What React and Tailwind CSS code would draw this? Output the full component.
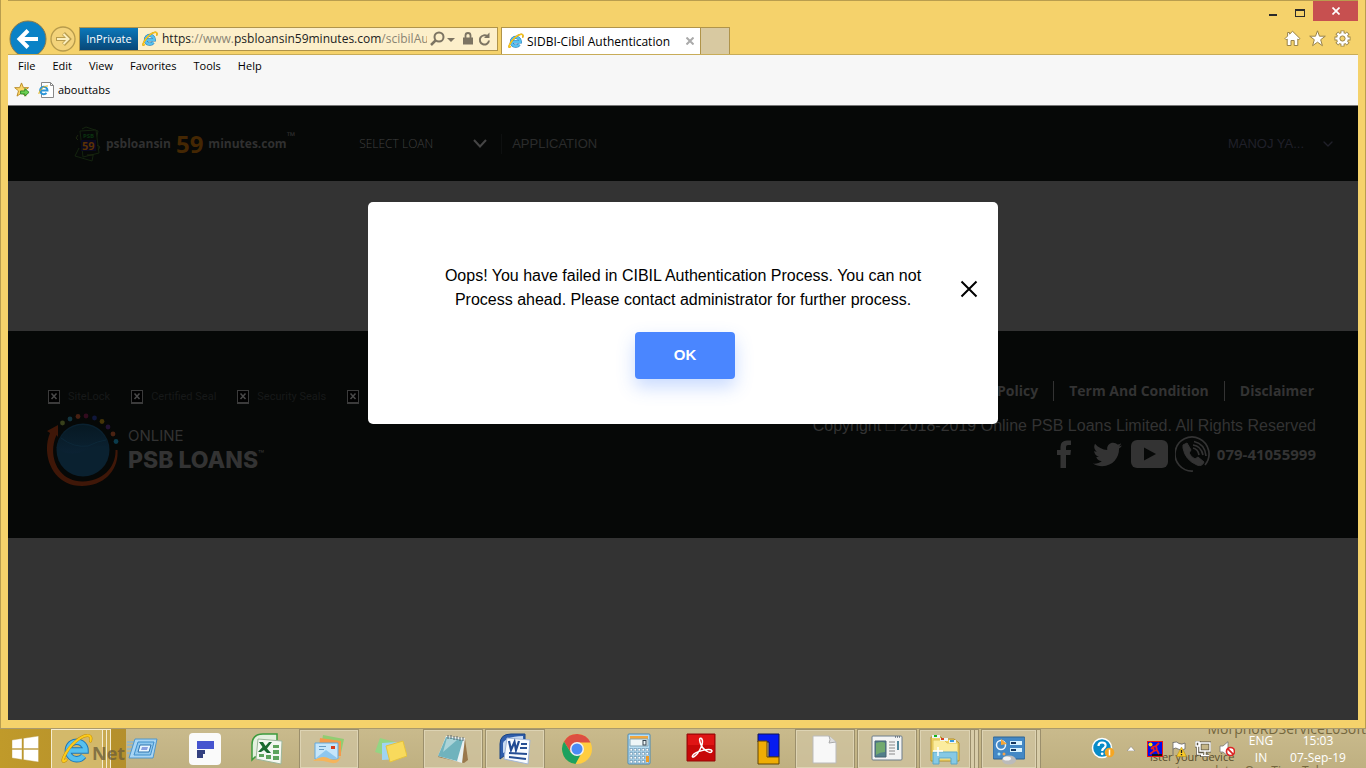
import React from "react";
import { FaTwitter } from "react-icons/fa";
import { ChevronDown } from "lucide-react";

function IeLogo({ className }) {
  return (
    <svg viewBox="0 0 32 32" className={className} aria-hidden="true">
      <path d="M8 17.5H24.5A8.8 8.8 0 1 0 22.6 23" fill="none" stroke="#1d77b8" strokeWidth="6.500" />
      <path d="M8 17.5H24.5A8.8 8.8 0 1 0 22.6 23" fill="none" stroke="#56c0ee" strokeWidth="4.500" />
      <path d="M5 27C-2 33 4 18 14 9C23 1 32 0 29.500 8" fill="none" stroke="#c08a08" strokeWidth="3" strokeLinecap="round" />
      <path d="M5 27C-2 33 4 18 14 9C23 1 32 0 29.500 8" fill="none" stroke="#fccb1c" strokeWidth="2.200" strokeLinecap="round" />
    </svg>
  );
}

function TitleArea() {
  return (
    <div className="flex flex-col h-[54px] overflow-hidden border-t border-[#b99d4e]">
      <div className="flex h-[19px] justify-end">
        <button aria-label="Minimize" className="w-[27px] flex items-center justify-center">
          <span className="w-2 h-0.5 mt-2 bg-[#2a2a2a]" />
        </button>
        <button aria-label="Maximize" className="w-[27px] flex items-center justify-center">
          <span className="w-2.5 h-2 mt-1 border border-t-2 border-[#2a2a2a]" />
        </button>
        <button aria-label="Close window" className="w-[45px] h-[20px] bg-[#c75050] flex items-center justify-center shrink-0">
          <svg viewBox="0 0 8 8" className="w-2 h-2"><path d="M.5 .5L7.500 7.500M7.500 .5L.5 7.500" stroke="#fff" strokeWidth="1.700" /></svg>
        </button>
      </div>
      <div className="flex items-start h-[34px] pl-px">
        <button aria-label="Back" className="shrink-0">
          <svg viewBox="0 0 38 38" className="w-[38px] h-[38px]">
            <circle cx="19" cy="19" r="18" fill="#0a82c6" stroke="#8a7a4a" strokeWidth="1" />
            <path d="M29 19H11M19 10.500L10.500 19L19 27.500" fill="none" stroke="#fff" strokeWidth="4" />
          </svg>
        </button>
        <button aria-label="Forward" className="shrink-0 mt-1.5 ml-[3px]">
          <svg viewBox="0 0 26 26" className="w-[26px] h-[26px]">
            <circle cx="13" cy="13" r="12" fill="#f3d37a" stroke="#b79b4c" strokeWidth="1.300" />
            <path d="M6 13H19M13.500 7.500L19 13L13.500 18.500" fill="none" stroke="#b79b4c" strokeWidth="4" />
            <path d="M7 13H18.500M13.500 8L18.500 13L13.500 18" fill="none" stroke="#fbeebd" strokeWidth="2" />
          </svg>
        </button>
        <div className="flex items-center w-[419px] h-[24px] mt-[7px] ml-[3px] border border-[#b0944a] bg-[#fcefca] shrink-0">
          <span className="h-full w-[58px] shrink-0 flex items-center justify-center bg-linear-to-b from-[#0a78ba] to-[#084878] text-white text-[11px]">InPrivate</span>
          <IeLogo className="w-4 h-4 mx-1 shrink-0" />
          <div className="flex-1 overflow-hidden whitespace-nowrap text-[12px] leading-5 text-[#8a8473]">
            <span className="text-[#222]">https</span>://www.<span className="text-[#222]">psbloansin59minutes.com</span>/scibilAuth
          </div>
          <svg viewBox="0 0 66 20" className="w-[66px] h-5 shrink-0 mr-1" fill="none" stroke="#7c7462" aria-hidden="true">
            <circle cx="12" cy="8" r="4.500" strokeWidth="2" />
            <path d="M8.500 11.500L4 16" strokeWidth="2.500" />
            <path d="M20 9h8l-4 4z" fill="#7c7462" stroke="none" />
            <rect x="36" y="8.500" width="10" height="7" fill="#7c7462" stroke="none" />
            <path d="M38.500 9V6.500a2.500 2.500 0 0 1 5 0V9" strokeWidth="1.800" />
            <path d="M60.500 7.500A4.600 4.600 0 1 0 62 11.500" strokeWidth="2" />
            <path d="M62.500 3.500v5.500h-5.500z" fill="#7c7462" stroke="none" />
          </svg>
        </div>
        <div className="flex items-center w-[200px] h-[27px] mt-[7px] ml-[3px] px-1.5 border border-b-0 border-[#b0944a] bg-white shrink-0">
          <IeLogo className="w-4 h-4 mr-[3px] shrink-0" />
          <span className="flex-1 text-[12px] whitespace-nowrap mt-px">SIDBI-Cibil Authentication</span>
          <button aria-label="Close tab">
            <svg viewBox="0 0 8 8" className="w-2 h-2"><path d="M.5 .5L7.500 7.500M7.500 .5L.5 7.500" stroke="#aaa" strokeWidth="2" /></svg>
          </button>
        </div>
        <button aria-label="New tab" className="w-[29px] h-[27px] mt-[7px] bg-[#d8c9a1] border border-l-0 border-b-0 border-[#b0944a] shrink-0" />
        <div className="flex ml-auto mt-2.5 mr-[7px] gap-2">
          <button aria-label="Home">
            <svg viewBox="0 0 17 17" className="w-[17px] h-[17px]"><path d="M8.500 1.200L16 8.600L14.800 9.800L13.800 9V15.500H10.200V10.500H7V15.500H3.200V9L2.200 9.800L1 8.600L3.600 6V2.500H5.600V4.200Z" fill="#fff" stroke="#998348" /></svg>
          </button>
          <button aria-label="Favorites">
            <svg viewBox="0 0 17 17" className="w-[17px] h-[17px]"><path d="M8.500 .8L10.500 6.200H16.300L11.700 9.700L13.400 15.700L8.500 12.200L3.600 15.700L5.300 9.700L.7 6.200H6.500Z" fill="#fff" stroke="#998348" /></svg>
          </button>
          <button aria-label="Tools">
            <svg viewBox="0 0 17 17" className="w-[17px] h-[17px]" fill="none">
              <g stroke="#998348" strokeWidth="4"><path d="M8.500 .5V16.500M.5 8.500H16.500M2.800 2.800L14.200 14.200M14.200 2.800L2.800 14.200" /></g>
              <circle cx="8.500" cy="8.500" r="5.800" fill="#fff" stroke="#998348" strokeWidth=".8" />
              <g stroke="#fff" strokeWidth="2.200"><path d="M8.500 1.300V15.700M1.300 8.500H15.700M3.400 3.400L13.600 13.600M13.600 3.400L3.400 13.600" /></g>
              <circle cx="8.500" cy="8.500" r="2.600" fill="#f4d26b" stroke="#998348" />
            </svg>
          </button>
        </div>
      </div>
    </div>
  );
}

function MenuArea() {
  return (
    <div className="bg-[#f7f7f7] border-t border-[#c8ac58] border-b border-b-[#777] text-[11px] leading-4 h-[52px]">
      <nav className="flex gap-[17px] px-2.5 pt-[3px]">
        {["File", "Edit", "View", "Favorites", "Tools", "Help"].map((m) => <button key={m}>{m}</button>)}
      </nav>
      <div className="flex items-center px-1.5 pt-2 gap-2">
        <button aria-label="Add to favorites">
          <svg viewBox="0 0 17 17" className="w-4 h-4">
            <path d="M8 1L10 6H15.500L11.200 9.400L12.800 15L8 11.700L3.200 15L4.800 9.400L.7 6H6Z" fill="#fbd768" stroke="#b98a24" />
            <path d="M7 9.500H11.500V7L16 11L11.500 15V12.700H7Z" fill="#6bd052" stroke="#2c8a2a" />
          </svg>
        </button>
        <button className="flex items-center gap-1">
          <svg viewBox="0 0 16 16" className="w-4 h-4">
            <path d="M3.500 .5H12.500L15.500 3.500V15.500H3.500Z" fill="#fff" stroke="#888" />
            <path d="M12.500 .5V3.500H15.500" fill="none" stroke="#888" />
            <path d="M2.500 8.500H9.500A3.700 3.700 0 1 0 8.500 11" fill="none" stroke="#2b95d8" strokeWidth="2" />
            <path d="M1 12C0 10 6 3 10 4" fill="none" stroke="#f0b91b" />
          </svg>
          abouttabs
        </button>
      </div>
    </div>
  );
}

function SiteHeader() {
  return (
    <header className="flex items-center h-[75px] bg-[#060807] pl-[66px] pr-[22px] font-['Liberation_Sans',Arial,sans-serif] text-[13px] text-[#2b2c2c]">
      <a href="#home" className="flex items-center font-['Open_Sans',sans-serif] font-bold text-[12px] text-[#303030] mr-16">
        <svg viewBox="0 0 32 36" className="w-8 h-9" aria-hidden="true">
          <g fill="#060807" stroke="#14240f" strokeWidth="1">
            <path d="M8 3L12 1L24 5L18 35L1 30L5 22" />
            <path d="M6 5L22 4L25 27L9 31Z" />
          </g>
          <path d="M7 14H22V25H7Z" fill="#090920" />
          <text x="9" y="12" fontSize="6" fill="#0b3510">PSB</text>
          <text x="8" y="24" fontSize="11" fill="#5c3204">59</text>
          <path d="M4 9l-2 3 2 2M23 19l3 2-2 3M13 29h6" stroke="#1c260f" fill="none" />
        </svg>
        psbloansin
        <span className="text-[24px] leading-8 mx-[5px] text-[#442703]">59</span>
        minutes.com<span className="text-[11px] leading-4 self-start mt-0.5">™</span>
      </a>
      <button className="flex items-center w-32 justify-between font-['Open_Sans',sans-serif] font-light text-[12px] text-[#404040]">
        SELECT LOAN
        <svg viewBox="0 0 14 9" className="w-3.5 h-[9px]"><path d="M1 1L7 7.500L13 1" fill="none" stroke="#454545" strokeWidth="2" /></svg>
      </button>
      <span className="w-px h-5 bg-[#0e1010] ml-3.5 mr-2.5" />
      <a href="#application">APPLICATION</a>
      <button className="ml-auto flex items-center gap-4 text-[#20202a]">MANOJ YA...<ChevronDown size={16} strokeWidth={2} /></button>
    </header>
  );
}

function Seal({ label }) {
  return (
    <span className="flex items-center gap-2">
      <svg viewBox="0 0 12 14" className="w-3 h-3.5">
        <rect x=".5" y=".5" width="11" height="13" fill="#000" stroke="#3b3b3b" />
        <path d="M0 12h12v2H0z" fill="#3b3b3b" />
        <path d="M3.500 3.500L8.500 9M8.500 3.500L3.500 9" stroke="#4a4a4a" strokeWidth="1.500" />
      </svg>
      {label}
    </span>
  );
}

function PsbLogo() {
  return (
    <svg viewBox="0 0 76 76" className="w-[76px] h-[76px]" aria-hidden="true">
      <defs><linearGradient id="globe" x1="0" y1="0" x2="0" y2="1"><stop offset="0" stopColor="#071923" /><stop offset="1" stopColor="#0b2233" /></linearGradient></defs>
      <circle cx="39" cy="38" r="26.500" fill="#0a2130" />
      <path d="M12.500 36Q26 46 42 38Q53 32 65 35A26.500 26.500 0 0 0 13 34Z" fill="url(#globe)" />
      <path d="M17 26Q30 36 44 34Q54 29 62 28" fill="none" stroke="#0c2738" />
      <path d="M6 21C-3 42 8 74 38 74C60 74 75 58 73.500 38H71.500C72 56 58 69 39 69.500C14 70 3 44 12.500 23L14 25V13L3 19Z" fill="#3f1708" />
      {[
        [18.500, 11, "#38401b"], [26, 7, "#12343f"], [34, 4.500, "#472012"], [42, 4, "#320b1e"], [50.500, 6, "#10173b"],
        [58, 9.500, "#453408"], [64, 15, "#231334"], [69, 22, "#4a2212"], [72, 29.500, "#0b3b4c"],
      ].map(([x, y, c]) => <circle key={c} cx={x} cy={y} r="2.400" fill={c} />)}
    </svg>
  );
}

function SiteFooter() {
  return (
    <footer className="flex justify-between h-[207px] bg-[#060807] pl-9 pr-[42px] font-['Liberation_Sans',Arial,sans-serif] text-[#333]">
      <div className="pt-[58px] min-w-0">
        <div className="flex gap-[21px] pl-1 text-[11px] leading-4 text-[#171919] font-['Roboto',sans-serif]">
          <Seal label="SiteLock" /><Seal label="Certified Seal" /><Seal label="Security Seals" /><Seal label="" />
        </div>
        <div className="flex items-center gap-2 mt-[7px]">
          <PsbLogo />
          <div className="font-['Inter',sans-serif] leading-6 pb-1">
            <div className="text-[15px]">ONLINE</div>
            <div className="flex text-[23px] font-extrabold">PSB LOANS<span className="text-[10px] leading-3 font-normal">™</span></div>
          </div>
        </div>
      </div>
      <div className="flex flex-col items-end pt-12 shrink-0">
        <nav className="flex items-center font-['Open_Sans',sans-serif] font-bold text-[14px] leading-6 pr-0.5">
          <a href="#privacy">Privacy Policy</a>
          <span className="w-px h-5 mx-[15px] bg-[#333]" />
          <a href="#terms">Term And Condition</a>
          <span className="w-px h-5 mx-[15px] bg-[#333]" />
          <a href="#disclaimer">Disclaimer</a>
        </nav>
        <p className="mt-[11px] text-[16px] leading-6 whitespace-nowrap">Copyright □ 2018-2019 Online PSB Loans Limited. All Rights Reserved</p>
        <div className="flex items-center h-9 -mt-0.5">
          <a href="#facebook" aria-label="Facebook" className="mr-[22px]"><svg viewBox="0 0 14 28" className="w-3.5 h-7"><path d="M14 .5V5H11Q9 5 9 7V10H14L13.400 15H9V28H3.500V15H0V10H3.500V7Q3.500 .5 10 .5Z" fill="#333" /></svg></a>
          <a href="#twitter" aria-label="Twitter" className="mr-[9px]"><FaTwitter size={29} /></a>
          <a href="#youtube" aria-label="YouTube" className="mr-[7px]"><svg viewBox="0 0 37 28" className="w-[37px] h-7"><rect width="37" height="28" rx="6" fill="#333" /><path d="M13 7.500L25 14L13 20.500Z" fill="#060807" /></svg></a>
          <a href="tel:079-41055999" className="flex items-center gap-1.5 font-['Open_Sans',sans-serif] font-bold text-[15px]">
            <svg viewBox="0 0 36 36" className="w-9 h-9" fill="none" stroke="#333">
              <path d="M18 35A17 17 0 1 1 30 29" strokeWidth="1.700" />
              <path d="M8 9L12 7L16 14L14 17Q16 21 20 23L23 21L29 26Q27 31 22 29Q10 24 8 12Z" fill="#333" />
              <path d="M18 12Q23 13 24 19M18 9Q26 10 28 19M19 5.500Q30 8 31 20" strokeWidth="1.700" />
            </svg>
            079-41055999
          </a>
        </div>
      </div>
    </footer>
  );
}

function FailureDialog() {
  return (
    <div className="absolute inset-0 flex justify-center items-start pt-24">
      <div role="dialog" aria-modal="true" aria-labelledby="dialog-message" className="relative w-[630px] max-w-full rounded-[5px] bg-white flex flex-col items-center pt-[62px] pb-[45px] font-['Liberation_Sans',Arial,sans-serif]">
        <p id="dialog-message" className="w-[500px] text-center text-[16px] leading-6 text-black">
          Oops! You have failed in CIBIL Authentication Process. You can not Process ahead. Please contact administrator for further process.
        </p>
        <button className="w-[100px] h-[47px] mt-5 ml-1 rounded-[4px] bg-[#4a86ff] text-white font-bold text-[15px] shadow-[0_8px_18px_rgba(74,134,255,0.3)]">OK</button>
        <button aria-label="Close" className="absolute right-5 top-[78px] w-[18px] h-[18px]">
          <svg viewBox="0 0 18 18" className="w-[18px] h-[18px]"><path d="M1.500 1.500L16.500 16.500M16.500 1.500L1.500 16.500" stroke="#000" strokeWidth="2" /></svg>
        </button>
      </div>
    </div>
  );
}

const icons = {
  ie: <IeLogo className="w-8 h-8" />,
  run: (
    <svg viewBox="0 0 32 32" className="w-8 h-8">
      <path d="M0 9h9M0 12h7M0 16h7M0 20h6" stroke="#8bb5d0" strokeWidth="1.500" />
      <path d="M8 6H30L26 25H2Z" fill="#a9d5f3" stroke="#4f96ca" />
      <path d="M11 9H27L23.500 22H7Z" fill="#8fc8ee" stroke="#3f8fcb" />
      <path d="M13 12H24L22 19H11Z" fill="#e9f6fe" stroke="#2f74ae" />
      <path d="M15 14H21L20 17H14Z" fill="#8a9fe0" />
    </svg>
  ),
  foxit: (
    <svg viewBox="0 0 32 32" className="w-8 h-8"><rect width="32" height="32" rx="4" fill="#fafafa" /><path d="M8 8H25V16H8Z" fill="#4654cf" /><path d="M8 17H16V21H14V25H8Z" fill="#33407f" /></svg>
  ),
  excel: (
    <svg viewBox="0 0 32 32" className="w-8 h-8">
      <path d="M1 27V12Q1 1 12 1H26V24H4Z" fill="#e4f0df" stroke="#3c9a3c" strokeWidth="1.500" />
      <path d="M7 6L31 8L30 31L5 26Z" fill="#f4f8f1" stroke="#9cb69a" />
      <path d="M8 9L12 9L14.500 13L18 9H21L16 15.500L20 20H16L13 17L10 19H7L11.500 14Z" fill="#19692e" />
      <path d="M22 12h6v3h-6zM22 17h6v4h-6zM22 23h6v4h-6zM15 22h5v4h-5zM8 21h5v3H8z" fill="#5da45b" />
    </svg>
  ),
  mail: (
    <svg viewBox="0 0 32 32" className="w-8 h-8">
      <path d="M10 2L31 6L28 20H7Z" fill="#91cd72" /><path d="M7 5L28 8V23H5Z" fill="#f39a4b" />
      <path d="M2 10H25V26H2Z" fill="#c6e6fa" stroke="#62a9dd" /><path d="M3 25L13 17L24 25" fill="#8dc7ef" />
      <path d="M18 13h4v3h-4z" fill="#d43c1c" /><path d="M6 13h7v1H6zM6 16h5v1H6z" fill="#649bc5" />
      <path d="M0 28Q10 21 17 26Q24 29 28 23Q26 33 15 29Q8 27 0 28Z" fill="#f5b45b" />
    </svg>
  ),
  notes: (
    <svg viewBox="0 0 32 32" className="w-8 h-8"><path d="M5 5L20 9L16 24L0 19Z" fill="#93d583" /><path d="M7 10L23 9V26L7 27Z" fill="#9fd4f3" /><path d="M11 13L28 8L32 23L15 29Z" fill="#f8da5c" stroke="#e5c33c" /></svg>
  ),
  notepad: (
    <svg viewBox="0 0 32 32" className="w-8 h-8">
      <path d="M10 4L28 6L31 27L27 30L1 24Z" fill="#99784c" /><path d="M9 3L28 5L25 30L1 23Z" fill="#e9f1f2" />
      <path d="M9 4L26 7L20 28L1 23Z" fill="#70b3bd" /><path d="M10 5L20 7L6 19Z" fill="#acd4d8" />
      <path d="M11 2v4M14 2v4M17 3v4M20 3v4M23 4v4M26 4v4" stroke="#59676b" />
    </svg>
  ),
  word: (
    <svg viewBox="0 0 32 32" className="w-8 h-8">
      <path d="M1 26V11Q1 1 12 1H26V23H5Z" fill="#305eac" stroke="#194282" /><path d="M4 10Q8 3 24 3V12L4 20Z" fill="#c8daf2" />
      <path d="M8 5L31 7L29 31L5 26Z" fill="#f8fbff" stroke="#a2b6d6" />
      <path d="M10 8L12 17L15.500 9L17 17L20 8" fill="none" stroke="#214b94" strokeWidth="2.200" />
      <path d="M22 11h6M21 15h7M10 20l18 1M10 24l17 2" stroke="#254e94" strokeWidth="2" />
    </svg>
  ),
  chrome: (
    <svg viewBox="0 0 32 32" className="w-8 h-8"><circle cx="16" cy="16" r="15" fill="#ffcd40" /><path d="M3 8.500A15 15 0 0 1 29.500 9.500H16L9.500 19Z" fill="#dd4f42" /><path d="M3 8.500L9.800 19.500L20 21L14.500 31A15 15 0 0 1 3 8.500Z" fill="#1da15f" /><circle cx="16" cy="16" r="7" fill="#f1f1f1" /><circle cx="16" cy="16" r="5.500" fill="#4b8bf4" /></svg>
  ),
  calc: (
    <svg viewBox="0 0 32 32" className="w-8 h-8">
      <rect x="5" y="1" width="22" height="30" rx="1" fill="#b7ddf2" stroke="#4989b5" /><path d="M7 3h18v3H7z" fill="#f0a73f" /><path d="M7 6h18v7H7z" fill="#eef6f7" stroke="#83a7b7" />
      <rect x="20" y="7.500" width="3" height="4.500" fill="none" stroke="#344450" />
      {[17, 21, 25, 29].map((y) => [8, 12, 16, 20, 24].map((x) => <rect key={x + "-" + y} x={x - 1} y={y - 1.5} width="2.500" height="2.500" fill="#fff" stroke="#6c96b3" strokeWidth=".7" />))}
      <path d="M23 23h3v6h-3z" fill="#ef9b25" />
    </svg>
  ),
  acrobat: (
    <svg viewBox="0 0 32 32" className="w-8 h-8"><path d="M2 1h28v27H2z" fill="#c70808" stroke="#930909" /><path d="M3 2h26v10H3z" fill="#ea1919" opacity=".7" /><path d="M8 22C5 26 12 25 17 12C19 4 13 3 15 9C17 17 26 22 27 18C26 14 10 19 8 22Z" fill="none" stroke="#fff" strokeWidth="1.500" /></svg>
  ),
  blocks: (
    <svg viewBox="0 0 32 32" className="w-8 h-8 ml-2.5"><path d="M6 1H27V24H17V9H6Z" fill="#061cf1" stroke="#101450" /><path d="M6 8H15V24H27V31H6Z" fill="#efad05" stroke="#604507" /></svg>
  ),
  file: <svg viewBox="0 0 32 32" className="w-8 h-8"><path d="M4 3H20L27 9V30H4Z" fill="#f8f8f8" stroke="#bbb" /><path d="M20 3Q22 7 20 10L27 9" fill="#ddd" stroke="#aaa" /></svg>,
  panel: (
    <svg viewBox="0 0 32 32" className="w-8 h-8"><rect x="1" y="3" width="30" height="24" rx="1" fill="#f3f4f4" stroke="#6d7d8a" /><path d="M4 8h11v16H4z" fill="#517f8a" stroke="#496272" /><path d="M5 10Q12 8 14 10V19Q9 19 5 22Z" fill="#71a96f" /><path d="M18 9h6M18 12h6M18 15h6M18 18h6M18 21h6" stroke="#888" /><path d="M26 8h2v9h-2z" fill="#4f879b" /><path d="M24 4h1M26 4h1M28 4h1" stroke="#234" /></svg>
  ),
  explorer: (
    <svg viewBox="0 0 32 32" className="w-8 h-8"><path d="M2 28V4H12L14 6H25L30 10V28Z" fill="#efd466" stroke="#b58f28" /><path d="M4 7h11l3 3h11v17H4z" fill="#fbec9e" stroke="#dfc35a" /><path d="M3 2h8v3H3zM11 5h8v3h-8zM20 7h7v3h-7z" fill="#eef5f7" /><path d="M5 2h3v2H5z" fill="#13b31c" /><path d="M12 5h3v2h-3z" fill="#d74320" /><path d="M21 7h4v2h-4z" fill="#3799dd" /><path d="M4 31V19H28V31H22V25H10V31Z" fill="#86c9e5" stroke="#5aa7c8" /><path d="M9 14v9M4 18h10" stroke="#fff" strokeWidth="1.500" /></svg>
  ),
  control: (
    <svg viewBox="0 0 32 32" className="w-8 h-8"><rect x="0" y="4" width="32" height="22" rx="1" fill="#4388c5" stroke="#2f6290" /><circle cx="8" cy="12" r="4.500" fill="none" stroke="#e9f6ff" strokeWidth="1.500" /><path d="M8 12V6L14 11Z" fill="#f6a637" /><path d="M17 8h12v4H17zM17 15h12v4H17z" fill="#d8f3ff" /><path d="M18 9h5v2h-5zM18 16h5v2h-5z" fill="#153760" /><circle cx="6" cy="21" r="1.500" fill="#a9e5f9" /><circle cx="11" cy="21" r="1.500" fill="#f4a34b" /><ellipse cx="16" cy="27" rx="7" ry="4.500" fill="#bbb" /><ellipse cx="14" cy="25.500" rx="4" ry="2" fill="#f5f5f5" /></svg>
  ),
};

const taskItems = [
  { name: "Internet Explorer", icon: "ie", state: "active", stack: 2 },
  { name: "Run", icon: "run" },
  { name: "Notes app", icon: "foxit" },
  { name: "Excel", icon: "excel" },
  { name: "Mail", icon: "mail", state: "open" },
  { name: "Sticky Notes", icon: "notes" },
  { name: "Notepad", icon: "notepad", state: "open" },
  { name: "Word", icon: "word", state: "open" },
  { name: "Chrome", icon: "chrome" },
  { name: "Calculator", icon: "calc" },
  { name: "Acrobat", icon: "acrobat" },
  { name: "Blocks", icon: "blocks" },
  { name: "File", icon: "file", state: "open" },
  { name: "Panel", icon: "panel", state: "open" },
  { name: "File Explorer", icon: "explorer", state: "open", stack: 2 },
  { name: "Control Panel", icon: "control", state: "open", stack: 1 },
];

function TaskItem({ item }) {
  const frame = item.state === "active"
    ? "border border-[#f5ecd0] bg-[#e4d294]/60"
    : item.state === "open" ? "border border-[#9b8f6c] shadow-[inset_0_0_0_1px_#ddd3b3] bg-[#d0c5a2]/70" : "";
  const edge = item.state === "active" ? "border-[#f5ecd0] bg-[#c9aa50]" : "border-[#9b8f6c] bg-[#d8cda9]";
  return (
    <button aria-label={item.name} className="flex w-[60px] h-10 shrink-0">
      <span className={"flex flex-1 h-full items-center justify-center " + frame}>{icons[item.icon]}</span>
      {Array.from({ length: item.stack || 0 }, (_, i) => <span key={i} className={"w-1 h-full border border-l-0 " + edge} />)}
    </button>
  );
}

function TrayIcons() {
  return (
    <>
      <button aria-label="Help" className="mr-3">
        <svg viewBox="0 0 24 24" className="w-6 h-6">
          <circle cx="11" cy="11" r="9.500" fill="#078bc8" stroke="#fff" strokeWidth="1.500" />
          <path d="M7.500 9Q7.500 5.500 11 5.500Q15 5.500 14.500 9Q14 10.500 12 12Q11.200 12.600 11.200 14" fill="none" stroke="#fff" strokeWidth="2.200" /><circle cx="11.200" cy="16.800" r="1.400" fill="#fff" />
          <circle cx="18.500" cy="15.500" r="4.800" fill="#f5a623" /><path d="M18.500 12.500v6" stroke="#fff" strokeWidth="1.500" />
        </svg>
      </button>
      <button aria-label="Show hidden icons" className="mr-3"><svg viewBox="0 0 8 5" className="w-2 h-[5px]"><path d="M0 5L4 .5L8 5Z" fill="#fff" stroke="#777" strokeWidth=".5" /></svg></button>
      <span className="flex gap-2 mr-3">
        <svg viewBox="0 0 16 16" className="w-4 h-4"><rect x=".5" y=".5" width="15" height="15" fill="#000ced" stroke="#ef1717" /><circle cx="3.500" cy="3.500" r="2" fill="#ffe30c" /><path d="M5 14h10" stroke="#171717" strokeWidth="2" /><path d="M3 13L7 10L6 6L9 5L12 2M7 10L10 9L12 13M9 5L10 9M6 6L4 8" stroke="#ee2020" strokeWidth="1.800" fill="none" /></svg>
        <svg viewBox="0 0 16 16" className="w-4 h-4"><path d="M2 1V15M2 1.500Q6 0 8 2.500Q11 4 14 2V8Q10 10 7 8Q5 6 2 8" fill="#fff" stroke="#666" strokeWidth=".8" /><path d="M10.500 6L15.500 15.500H5.500Z" fill="#f7c928" stroke="#b08d10" strokeWidth=".5" /><path d="M10.500 9v3M10.500 13v1.300" stroke="#222" strokeWidth="1.300" /></svg>
        <svg viewBox="0 0 16 16" className="w-4 h-4" fill="none" stroke="#fff" strokeWidth="1.500"><path d="M5 2H15V10H5ZM10 10V14M5 14.500H14M1 1H4V5H1ZM2.500 5V13H8" stroke="#5b5544" strokeWidth="3" /><path d="M5 2H15V10H5ZM10 10V14M6 14.500H14M1 1H4V5H1ZM2.500 5V13H8" /></svg>
        <svg viewBox="0 0 16 16" className="w-4 h-4"><path d="M1 5H4L9 .7V15L4 11H1Z" fill="#fff" stroke="#777" strokeWidth=".8" /><circle cx="11.500" cy="10.500" r="4" fill="#fff" stroke="#dd2525" strokeWidth="1.700" /><path d="M8.700 7.700L14.300 13.300" stroke="#dd2525" strokeWidth="1.700" /></svg>
      </span>
    </>
  );
}

function Taskbar() {
  return (
    <div className="relative flex h-10 overflow-hidden border-t border-[#aa9a6c] bg-linear-to-b from-[#c9ba8c] to-[#bfb081]">
      <div aria-hidden="true" className="absolute inset-0 text-[#75673d] whitespace-nowrap">
        <span className="absolute left-0 top-0 w-[126px] h-10 bg-linear-to-r from-[#c09a2a] to-[#b48f2c]" />
        <span className="absolute right-0 -top-2 text-[14px] leading-4">MorphoRDServiceL0Soft</span>
        <span className="absolute left-[1150px] top-[20px] text-[11px] leading-4 text-[#574c2c]">ister your device</span>
        <span className="absolute left-[1164px] top-[34px] text-[12px] leading-4">ast completes One Time Token</span>
      </div>
      <button aria-label="Start" className="relative w-[51px] pr-0.5 shrink-0 flex items-center justify-center">
        <svg viewBox="0 0 28 28" className="w-7 h-7"><path d="M1 5L11 3.500V13.500H1ZM12.500 3.300L27.500 1V13.500H12.500ZM1 14.500H11V24.500L1 23ZM12.500 14.500H27.500V27L12.500 24.700Z" fill="#fff" stroke="#b99a45" strokeWidth=".4" /></svg>
      </button>
      <div className="relative flex gap-0.5">
        {taskItems.map((i) => <TaskItem key={i.name} item={i} />)}
        <span aria-hidden="true" className="absolute left-[41px] top-3 text-[18px] font-bold leading-6 text-[#6e5f3a]/80">Net</span>
      </div>
      <div className="relative ml-auto flex items-center text-white text-[12px] leading-[17px] shrink-0">
        <TrayIcons />
        <div className="w-7 text-center">ENG<br />IN</div>
        <div className="w-[58px] ml-3.5 mr-[19px] text-center whitespace-nowrap">15:03<br />07-Sep-19</div>
      </div>
    </div>
  );
}

export default function App() {
  return (
    <div className="min-h-screen flex flex-col bg-[#f5d26b] font-['Open_Sans','Segoe_UI',sans-serif] text-black">
      <div className="flex-1 flex flex-col px-[7px] pb-2 border-x border-[#b99d4e]">
        <TitleArea />
        <MenuArea />
        <main className="relative flex-1 flex flex-col bg-[#333]">
          <SiteHeader />
          <div className="h-[150px]" />
          <SiteFooter />
          <FailureDialog />
        </main>
      </div>
      <Taskbar />
    </div>
  );
}
